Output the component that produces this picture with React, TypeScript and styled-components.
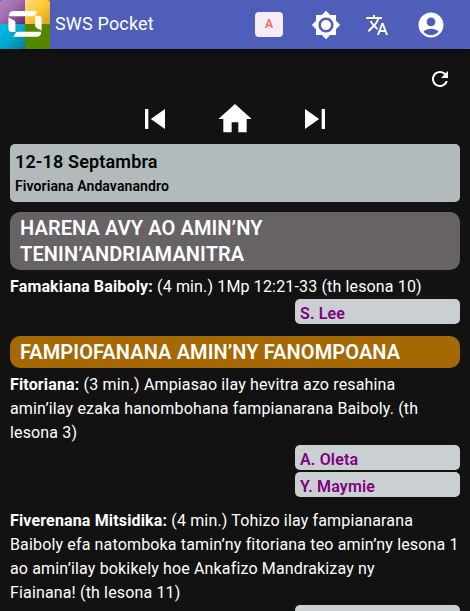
import React from "react";
import styled, { createGlobalStyle } from "styled-components";

const GlobalStyle = createGlobalStyle`
  * { box-sizing: border-box; }
  html, body, #root { height: 100%; }
  body {
    margin: 0;
    overflow: hidden;
    background: #121212;
    color: #fff;
    font: 400 16px/24px Roboto, sans-serif;
  }
`;

const Page = styled.div`
  height: 100%;
  overflow: hidden;
`;

const AppBar = styled.header`
  display: flex;
  align-items: center;
  height: 49px;
  padding-right: 12px;
  background: #4f5fb9;
  box-shadow: 0 1px 4px rgba(0, 0, 0, 0.5);
`;

const Title = styled.div`
  flex: 1;
  padding: 0 0 2px 5px;
  font-size: 18px;
  line-height: 24px;
  letter-spacing: 0.17px;
`;

const Tools = styled.div`
  display: flex;
  align-items: center;
  height: 48px;
`;

const IconButton = styled.button<{ $width: number }>`
  display: flex;
  justify-content: center;
  width: ${(p) => p.$width}px;
  padding: 0;
  border: 0;
  background: none;
  color: inherit;
`;

const LetterBadge = styled.div`
  display: flex;
  align-items: center;
  justify-content: center;
  width: 28px;
  height: 25px;
  padding-bottom: 1px;
  margin-right: 19px;
  border-radius: 4px;
  background: #f5ecf8;
  color: #f07068;
  font-size: 12px;
  font-weight: 700;
`;

const RefreshRow = styled.div`
  display: flex;
  justify-content: flex-end;
  padding: 18px 18px 8px 0;
  height: 50px;
`;

const WeekNav = styled.nav`
  display: flex;
  justify-content: center;
  gap: 40px;
  height: 45px;
`;

const Content = styled.main`
  padding: 0 10px;
  letter-spacing: 0.15px;
`;

const DateCard = styled.section`
  height: 58px;
  padding: 5px;
  border-radius: 5px;
  background: #b2babb;
  color: #000;
  font-weight: 600;
`;

const Week = styled.div`
  font-size: 18px;
  line-height: 26px;
  letter-spacing: 0.15px;
`;

const Meeting = styled.div`
  font-size: 14px;
  line-height: 22px;
  letter-spacing: 0.1px;
`;

const SectionTitle = styled.h2<{ $color: string }>`
  margin: 10px 0 5px;
  padding: 3px 10px;
  border-radius: 10px;
  background: ${(p) => p.$color};
  font-size: 20px;
  font-weight: 600;
  line-height: 26px;
  letter-spacing: 0.1px;
`;

const Part = styled.article`
  padding-bottom: 2px;

  & + & {
    margin-top: 10px;
  }
`;

const PartText = styled.p`
  margin: 0;
`;

const PartName = styled.b`
  font-weight: 700;
`;

const Assignees = styled.div`
  display: flex;
  flex-direction: column;
  align-items: flex-end;
  gap: 2px;
`;

const Assignee = styled.div`
  width: 165px;
  height: 25px;
  padding: 3px 5px 0;
  border-radius: 5px;
  background: #cacfd2;
  color: purple;
  font-weight: 600;
`;

const paths = {
  theme:
    "M20 8.69V4h-4.69L12 .69 8.69 4H4v4.69L.69 12 4 15.31V20h4.69L12 23.31 15.31 20H20v-4.69L23.31 12 20 8.69zM12 18c-3.31 0-6-2.69-6-6s2.69-6 6-6 6 2.69 6 6-2.69 6-6 6zm0-10c-2.21 0-4 1.79-4 4s1.79 4 4 4 4-1.79 4-4-1.79-4-4-4z",
  translate:
    "m12.87 15.07-2.54-2.51.03-.03c1.74-1.94 2.98-4.17 3.71-6.53H17V4h-7V2H8v2H1v1.99h11.17C11.5 7.92 10.44 9.75 9 11.35 8.07 10.32 7.3 9.19 6.69 8h-2c.73 1.63 1.73 3.17 2.98 4.56l-5.09 5.02L4 19l5-5 3.11 3.11.76-2.04zM18.5 10h-2L12 22h2l1.12-3h4.75L21 22h2l-4.5-12zm-2.62 7 1.62-4.33L19.12 17h-3.24z",
  account:
    "M12 2C6.48 2 2 6.48 2 12s4.48 10 10 10 10-4.48 10-10S17.52 2 12 2zm0 4c1.93 0 3.5 1.57 3.5 3.5S13.93 13 12 13s-3.5-1.57-3.5-3.5S10.07 6 12 6zm0 14c-2.03 0-4.43-.82-6.14-2.88C7.55 15.8 9.68 15 12 15s4.45.8 6.14 2.12C16.43 19.18 14.03 20 12 20z",
  refresh:
    "M17.65 6.35C16.2 4.9 14.21 4 12 4c-4.42 0-7.99 3.58-7.99 8s3.57 8 7.99 8c3.73 0 6.84-2.55 7.73-6h-2.08c-.82 2.33-3.04 4-5.65 4-3.31 0-6-2.69-6-6s2.69-6 6-6c1.66 0 3.14.69 4.22 1.78L13 11h7V4l-2.35 2.35z",
  previous: "M6 6h2v12H6zm3.5 6 8.5 6V6z",
  home: "M10 20v-6h4v6h5v-8h3L12 3 2 12h3v8z",
  next: "m6 18 8.5-6L6 6v12zM16 6v12h2V6h-2z",
};

const Icon = ({ name, size = 24 }: { name: keyof typeof paths; size?: number }) => (
  <svg width={size} height={size} viewBox="0 0 24 24" fill="currentColor">
    <path d={paths[name]} />
  </svg>
);

const Logo = () => (
  <svg width="50" height="49" viewBox="0 0 50 49">
    <defs>
      <linearGradient id="violet" x1="0" y1="0" x2="1" y2="1">
        <stop offset="0" stopColor="#b286bd" />
        <stop offset=".45" stopColor="#a06cad" />
        <stop offset="1" stopColor="#68257b" />
      </linearGradient>
      <linearGradient id="yellow" x1="0" y1="0" x2="1" y2="1">
        <stop offset="0" stopColor="#ffdc80" />
        <stop offset=".5" stopColor="#ffc72e" />
        <stop offset="1" stopColor="#dba01c" />
      </linearGradient>
      <linearGradient id="cyan" x1="0" y1="0" x2="1" y2="1">
        <stop offset="0" stopColor="#00bce4" />
        <stop offset=".5" stopColor="#00a9cd" />
        <stop offset="1" stopColor="#007e9c" />
      </linearGradient>
      <clipPath id="tile">
        <rect width="50" height="49" rx="3" />
      </clipPath>
    </defs>
    <g clipPath="url(#tile)">
      <path fill="url(#violet)" d="M0 0h25v24H0z" />
      <path fill="url(#yellow)" d="M25 0h25v24H25z" />
      <path fill="url(#cyan)" d="M0 24h25v25H0z" />
      <path fill="#568500" d="M25 24h25v25H25z" />
    </g>
    <g fill="#fff">
      <path d="M12.5 11H37L35.5 14.5Q34.6 16.2 32.5 16.2H8.8Q9.2 11.4 12.5 11z" />
      <path d="M8.4 17.4L14 20.3Q15.4 21 15.4 22.5V32H11.5Q8.4 31.7 8.4 28.5z" />
      <path d="M35.2 15.8H38.4Q41.6 16 41.6 19V30.6L36.6 28Q35.2 27.2 35.2 25.5z" />
      <path d="M18 31.8H41.3Q41 36.6 37.2 36.8H13.3L15.1 33.5Q16 31.8 18 31.8z" />
    </g>
  </svg>
);

type PartData = { name: string; text: string; people: string[] };

const treasures: PartData[] = [
  { name: "Famakiana Baiboly:", text: "(4 min.) 1Mp 12:21-33 (th lesona 10)", people: ["S. Lee"] },
];

const ministry: PartData[] = [
  {
    name: "Fitoriana:",
    text: "(3 min.) Ampiasao ilay hevitra azo resahina amin’ilay ezaka hanombohana fampianarana Baiboly. (th lesona 3)",
    people: ["A. Oleta", "Y. Maymie"],
  },
  {
    name: "Fiverenana Mitsidika:",
    text: "(4 min.) Tohizo ilay fampianarana Baiboly efa natomboka tamin’ny fitoriana teo amin’ny lesona 1 ao amin’ilay bokikely hoe Ankafizo Mandrakizay ny Fiainana!\u00a0(th lesona 11)",
    people: [""],
  },
];

const Parts = ({ items }: { items: PartData[] }) => (
  <>
    {items.map((item) => (
      <Part key={item.name}>
        <PartText>
          <PartName>{item.name}</PartName> {item.text}
        </PartText>
        <Assignees>
          {item.people.map((person) => (
            <Assignee key={person}>{person}</Assignee>
          ))}
        </Assignees>
      </Part>
    ))}
  </>
);

export default function App() {
  return (
    <Page>
      <GlobalStyle />
      <AppBar>
        <Logo />
        <Title>SWS Pocket</Title>
        <Tools>
          <LetterBadge>A</LetterBadge>
          <IconButton $width={48} aria-label="Theme"><Icon name="theme" size={30} /></IconButton>
          <IconButton $width={54} aria-label="Language"><Icon name="translate" /></IconButton>
          <IconButton $width={54} aria-label="Account"><Icon name="account" size={30} /></IconButton>
        </Tools>
      </AppBar>
      <RefreshRow>
        <IconButton $width={24} aria-label="Refresh"><Icon name="refresh" /></IconButton>
      </RefreshRow>
      <WeekNav>
        <IconButton $width={40} aria-label="Previous week"><Icon name="previous" size={40} /></IconButton>
        <IconButton $width={40} aria-label="Current week"><Icon name="home" size={40} /></IconButton>
        <IconButton $width={40} aria-label="Next week"><Icon name="next" size={40} /></IconButton>
      </WeekNav>
      <Content>
        <DateCard>
          <Week>12-18 Septambra</Week>
          <Meeting>Fivoriana Andavanandro</Meeting>
        </DateCard>
        <SectionTitle $color="#676266">HARENA AVY AO AMIN’NY TENIN’ANDRIAMANITRA</SectionTitle>
        <Parts items={treasures} />
        <SectionTitle $color="#a56803">FAMPIOFANANA AMIN’NY FANOMPOANA</SectionTitle>
        <Parts items={ministry} />
      </Content>
    </Page>
  );
}
